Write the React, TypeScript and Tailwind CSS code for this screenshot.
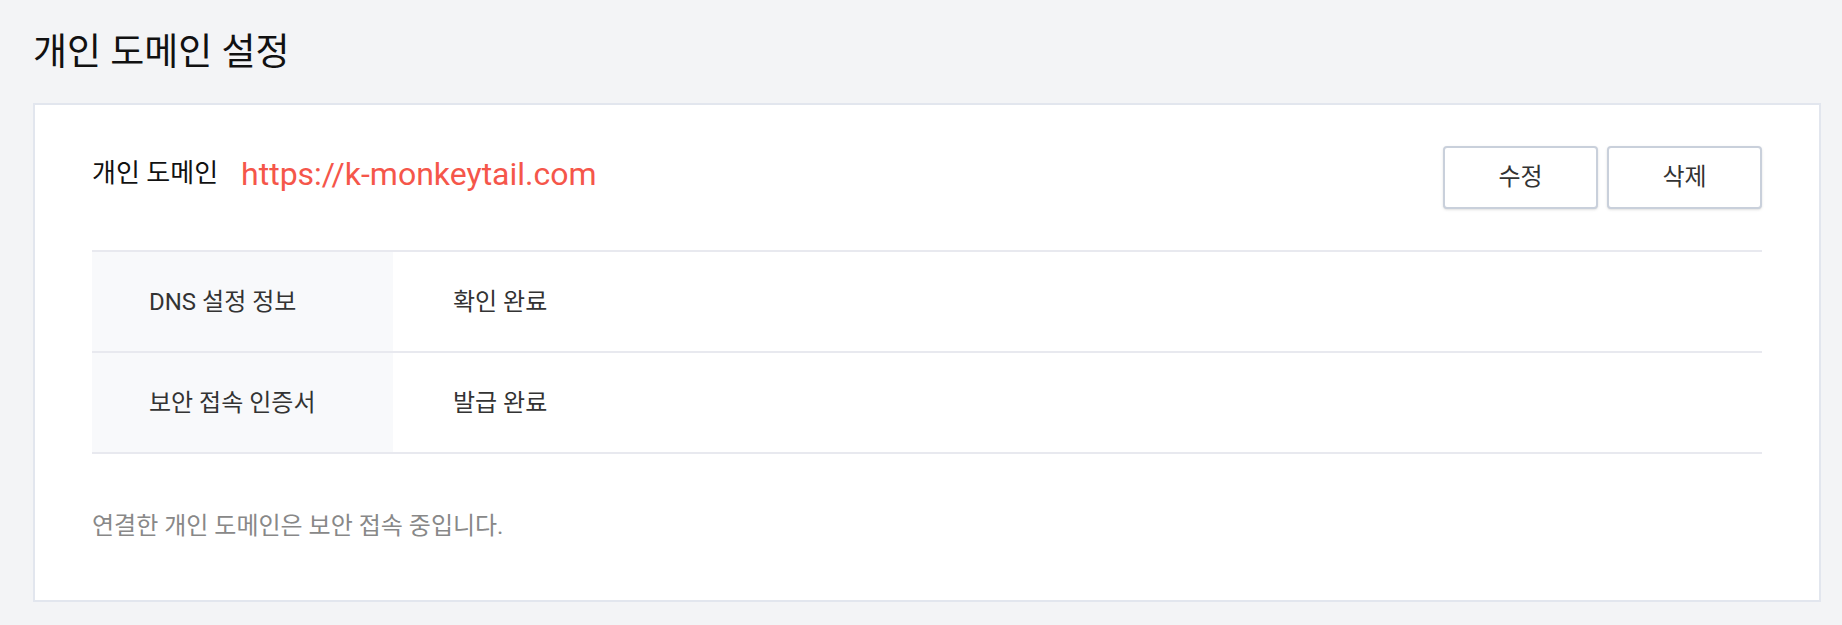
const rows = [
  { label: "DNS 설정 정보", value: "확인 완료" },
  { label: "보안 접속 인증서", value: "발급 완료" },
];

const App = () => {
  return (
    <div
      className="min-h-[625px] w-full bg-[#f3f4f6] pt-[28px]"
      style={{ fontFamily: 'Roboto, "Noto Sans CJK KR", sans-serif' }}
    >
      <h1 className="ml-[33px] text-[37px] leading-[50px] text-[#111]">개인 도메인 설정</h1>

      {/* Card */}
      <div className="ml-[33px] mr-[21px] mt-[25px] border-2 border-[#e2e6ee] bg-white px-[57px] pb-[58px] pt-[41px]">
        <div className="flex h-[62px] items-center justify-between">
          <div className="mb-[7px] flex items-center gap-[23px]">
            <span className="text-[26px] text-[#111]">개인 도메인</span>
            <span className="text-[32px] leading-[40px] text-[#f5564a]">https://k-monkeytail.com</span>
          </div>
          <div className="flex gap-[9px]">
            <button className="h-[63px] w-[155px] rounded-sm border-2 border-[#c9d0db] bg-white text-[24px] text-[#333] shadow-sm">
              수정
            </button>
            <button className="h-[63px] w-[155px] rounded-sm border-2 border-[#c9d0db] bg-white text-[24px] text-[#333] shadow-sm">
              삭제
            </button>
          </div>
        </div>

        {/* Status table */}
        <div className="mt-[42px] border-b-2 border-[#e8e9ef]">
          {rows.map((row) => (
            <div key={row.label} className="flex h-[101px] border-t-2 border-[#e8e9ef]">
              <div className="flex w-[301px] items-center bg-[#f8f9fb] pl-[57px] text-[24px] text-[#333]">
                {row.label}
              </div>
              <div className="flex items-center pl-[60px] text-[24px] text-[#333]">{row.value}</div>
            </div>
          ))}
        </div>

        <p className="mt-[56px] text-[24px] leading-[32px] text-[#888]">
          연결한 개인 도메인은 보안 접속 중입니다.
        </p>
      </div>
    </div>
  );
};

export default App;
